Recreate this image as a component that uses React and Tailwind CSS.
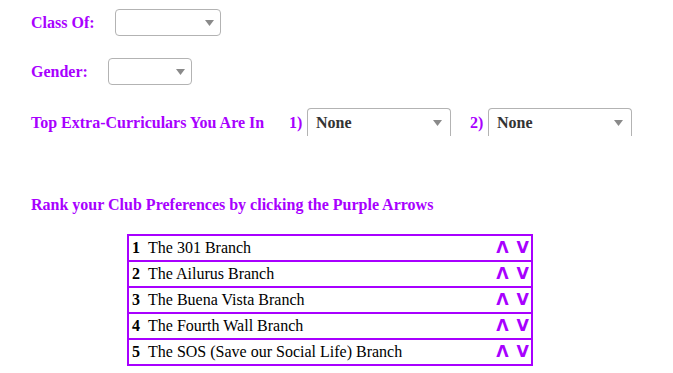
import React from "react";

const clubs = [
  "The 301 Branch",
  "The Ailurus Branch",
  "The Buena Vista Branch",
  "The Fourth Wall Branch",
  "The SOS (Save our Social Life) Branch",
];

function Caret() {
  return (
    <svg width="9" height="6" viewBox="0 0 9 6" className="shrink-0">
      <path d="M0 0h9L4.5 6z" fill="#8a8a8a" />
    </svg>
  );
}

function EmptySelect({ width }) {
  return (
    <div
      className={`flex items-center justify-end h-[27px] border border-[#b3b3b3] rounded-[4px] pr-[6px] bg-white ${width}`}
    >
      <Caret />
    </div>
  );
}

function NoneSelect() {
  return (
    <div className="flex items-center justify-between w-[144px] h-[28px] border-t border-x border-[#b3b3b3] rounded-t-[4px] pl-[8px] pr-[8px] mt-[1px] bg-white">
      <span className="text-[16px] font-bold text-[#333]">None</span>
      <Caret />
    </div>
  );
}

export default function App() {
  return (
    <div className="w-[673px] h-[373px] bg-white font-['Liberation_Serif',serif] text-[16px] overflow-hidden">
      <div className="pl-[31px] pt-[9px]">
        <div className="flex items-center h-[27px]">
          <span className="font-bold text-[#a800ff] w-[84px]">Class Of:</span>
          <EmptySelect width="w-[106px]" />
        </div>
        <div className="flex items-center h-[27px] mt-[22px]">
          <span className="font-bold text-[#a800ff] w-[77px]">Gender:</span>
          <EmptySelect width="w-[84px]" />
        </div>
        <div className="flex items-start h-[28px] mt-[22px]">
          <span className="font-bold text-[#a800ff] mt-[4px] w-[258px]">
            Top Extra-Curriculars You Are In
          </span>
          <span className="font-bold text-[#a800ff] mt-[4px] w-[18px]">1)</span>
          <NoneSelect />
          <span className="font-bold text-[#a800ff] mt-[4px] ml-[19px] w-[18px]">2)</span>
          <NoneSelect />
        </div>
        <div className="font-bold text-[#a800ff] mt-[60px] leading-[20px]">
          Rank your Club Preferences by clicking the Purple Arrows
        </div>
      </div>
      <div className="ml-[127px] mt-[19px] w-[406px] border-2 border-[#a800ff]">
        {clubs.map((club, i) => (
          <div
            key={club}
            className={`flex items-center h-[24px] pl-[3px] pr-[2px] ${
              i < clubs.length - 1 ? "border-b-2 border-[#a800ff] h-[26px]" : ""
            }`}
          >
            <span className="font-bold w-[16px]">{i + 1}</span>
            <span className="flex-1">{club}</span>
            <span className="flex gap-[8px] font-['DejaVu_Sans',sans-serif] font-bold text-[#a800ff] text-[16px]">
              <span>Λ</span>
              <span>V</span>
            </span>
          </div>
        ))}
      </div>
    </div>
  );
}
